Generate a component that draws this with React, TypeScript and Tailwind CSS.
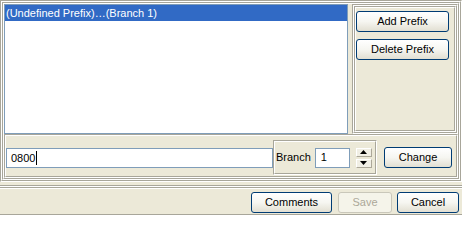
import React from "react";

function Etched({ className = "", inner = "", children }: { className?: string; inner?: string; children?: React.ReactNode }) {
  return (
    <div className={`border border-t-[#a8a69a] border-l-[#a8a69a] border-r-white border-b-white ${className}`}>
      <div className={`h-full w-full border border-t-white border-l-white border-r-[#a8a69a] border-b-[#a8a69a] ${inner}`}>{children}</div>
    </div>
  );
}

function XPButton({ className = "", disabled = false, children }: { className?: string; disabled?: boolean; children: React.ReactNode }) {
  return (
    <div
      className={`flex items-center justify-center rounded-[3px] border text-[11px] ${
        disabled
          ? "border-[#c9c7ba] bg-[#f5f4ea] text-[#aca899]"
          : "border-[#003c74] bg-linear-to-b from-white via-[#f6f6f1] to-[#e2dfd2] text-black"
      } ${className}`}
    >
      {children}
    </div>
  );
}

function Spin({ up }: { up?: boolean }) {
  return (
    <div className="flex h-[9px] w-[16px] items-center justify-center border border-t-white border-l-white border-r-[#aca899] border-b-[#aca899] bg-[#f1efe5]">
      <svg width="7" height="4" viewBox="0 0 7 4">
        {up ? <polygon points="3.5,0 7,4 0,4" fill="#000" /> : <polygon points="0,0 7,0 3.5,4" fill="#000" />}
      </svg>
    </div>
  );
}

export default function App() {
  return (
    <div
      className="flex h-[215px] w-[462px] flex-col overflow-hidden bg-[#ece9d8] text-[11px] leading-none text-black"
      style={{ fontFamily: '"Liberation Sans", Arial, sans-serif' }}
    >
      {/* top section */}
      <Etched className="h-[182px] w-[462px] shrink-0">
        <Etched className="h-full w-full" inner="flex flex-col">
          {/* upper row */}
          <div className="flex h-[130px] shrink-0">
            <div className="h-full w-[344px] border border-[#7f9db9] bg-white">
              <div className="flex h-[16px] items-center bg-[#316ac5] pl-[1px] text-white">
                (Undefined Prefix)…(Branch 1)
              </div>
            </div>
            <div className="w-[4px]" />
            <Etched className="h-full w-[106px]">
              <Etched className="h-full w-full" inner="flex flex-col pt-[3px]">
                <XPButton className="h-[21px] w-[93px]">Add Prefix</XPButton>
                <XPButton className="mt-[7px] h-[21px] w-[93px]">Delete Prefix</XPButton>
              </Etched>
            </Etched>
          </div>
          {/* lower row */}
          <Etched className="h-[44px] w-full shrink-0" inner="flex items-start">
            <div className="mt-[12px] flex h-[20px] w-[267px] items-center border border-[#7f9db9] bg-white pl-[4px]">
              <span>0800</span>
              <span className="ml-[1px] h-[14px] w-[1px] bg-black" />
            </div>
            <Etched className="mt-[4px] h-[35px] w-[104px]" inner="flex items-center">
              <span className="ml-[1px]">Branch</span>
              <div className="ml-[4px] flex h-[20px] w-[35px] items-center border border-[#7f9db9] bg-white pl-[5px]">1</div>
              <div className="ml-[6px] flex flex-col gap-[2px]">
                <Spin up />
                <Spin />
              </div>
            </Etched>
            <XPButton className="ml-[7px] mt-[11px] h-[21px] w-[68px]">Change</XPButton>
          </Etched>
        </Etched>
      </Etched>
      {/* bottom section */}
      <div className="flex flex-1 flex-col pt-[3px]">
        <div className="h-[1px] bg-[#a8a69a]" />
        <div className="h-[1px] bg-white" />
        <div className="h-[1px] bg-[#a8a69a]" />
        <div className="h-[1px] bg-white" />
        <div className="flex flex-1 items-start justify-end pr-[3px] pt-[3px]">
          <XPButton className="h-[21px] w-[81px]">Comments</XPButton>
          <XPButton disabled className="ml-[6px] h-[21px] w-[54px]">Save</XPButton>
          <XPButton className="ml-[5px] h-[21px] w-[62px]">Cancel</XPButton>
        </div>
        <div className="h-[1px] bg-[#a8a69a]" />
      </div>
    </div>
  );
}
